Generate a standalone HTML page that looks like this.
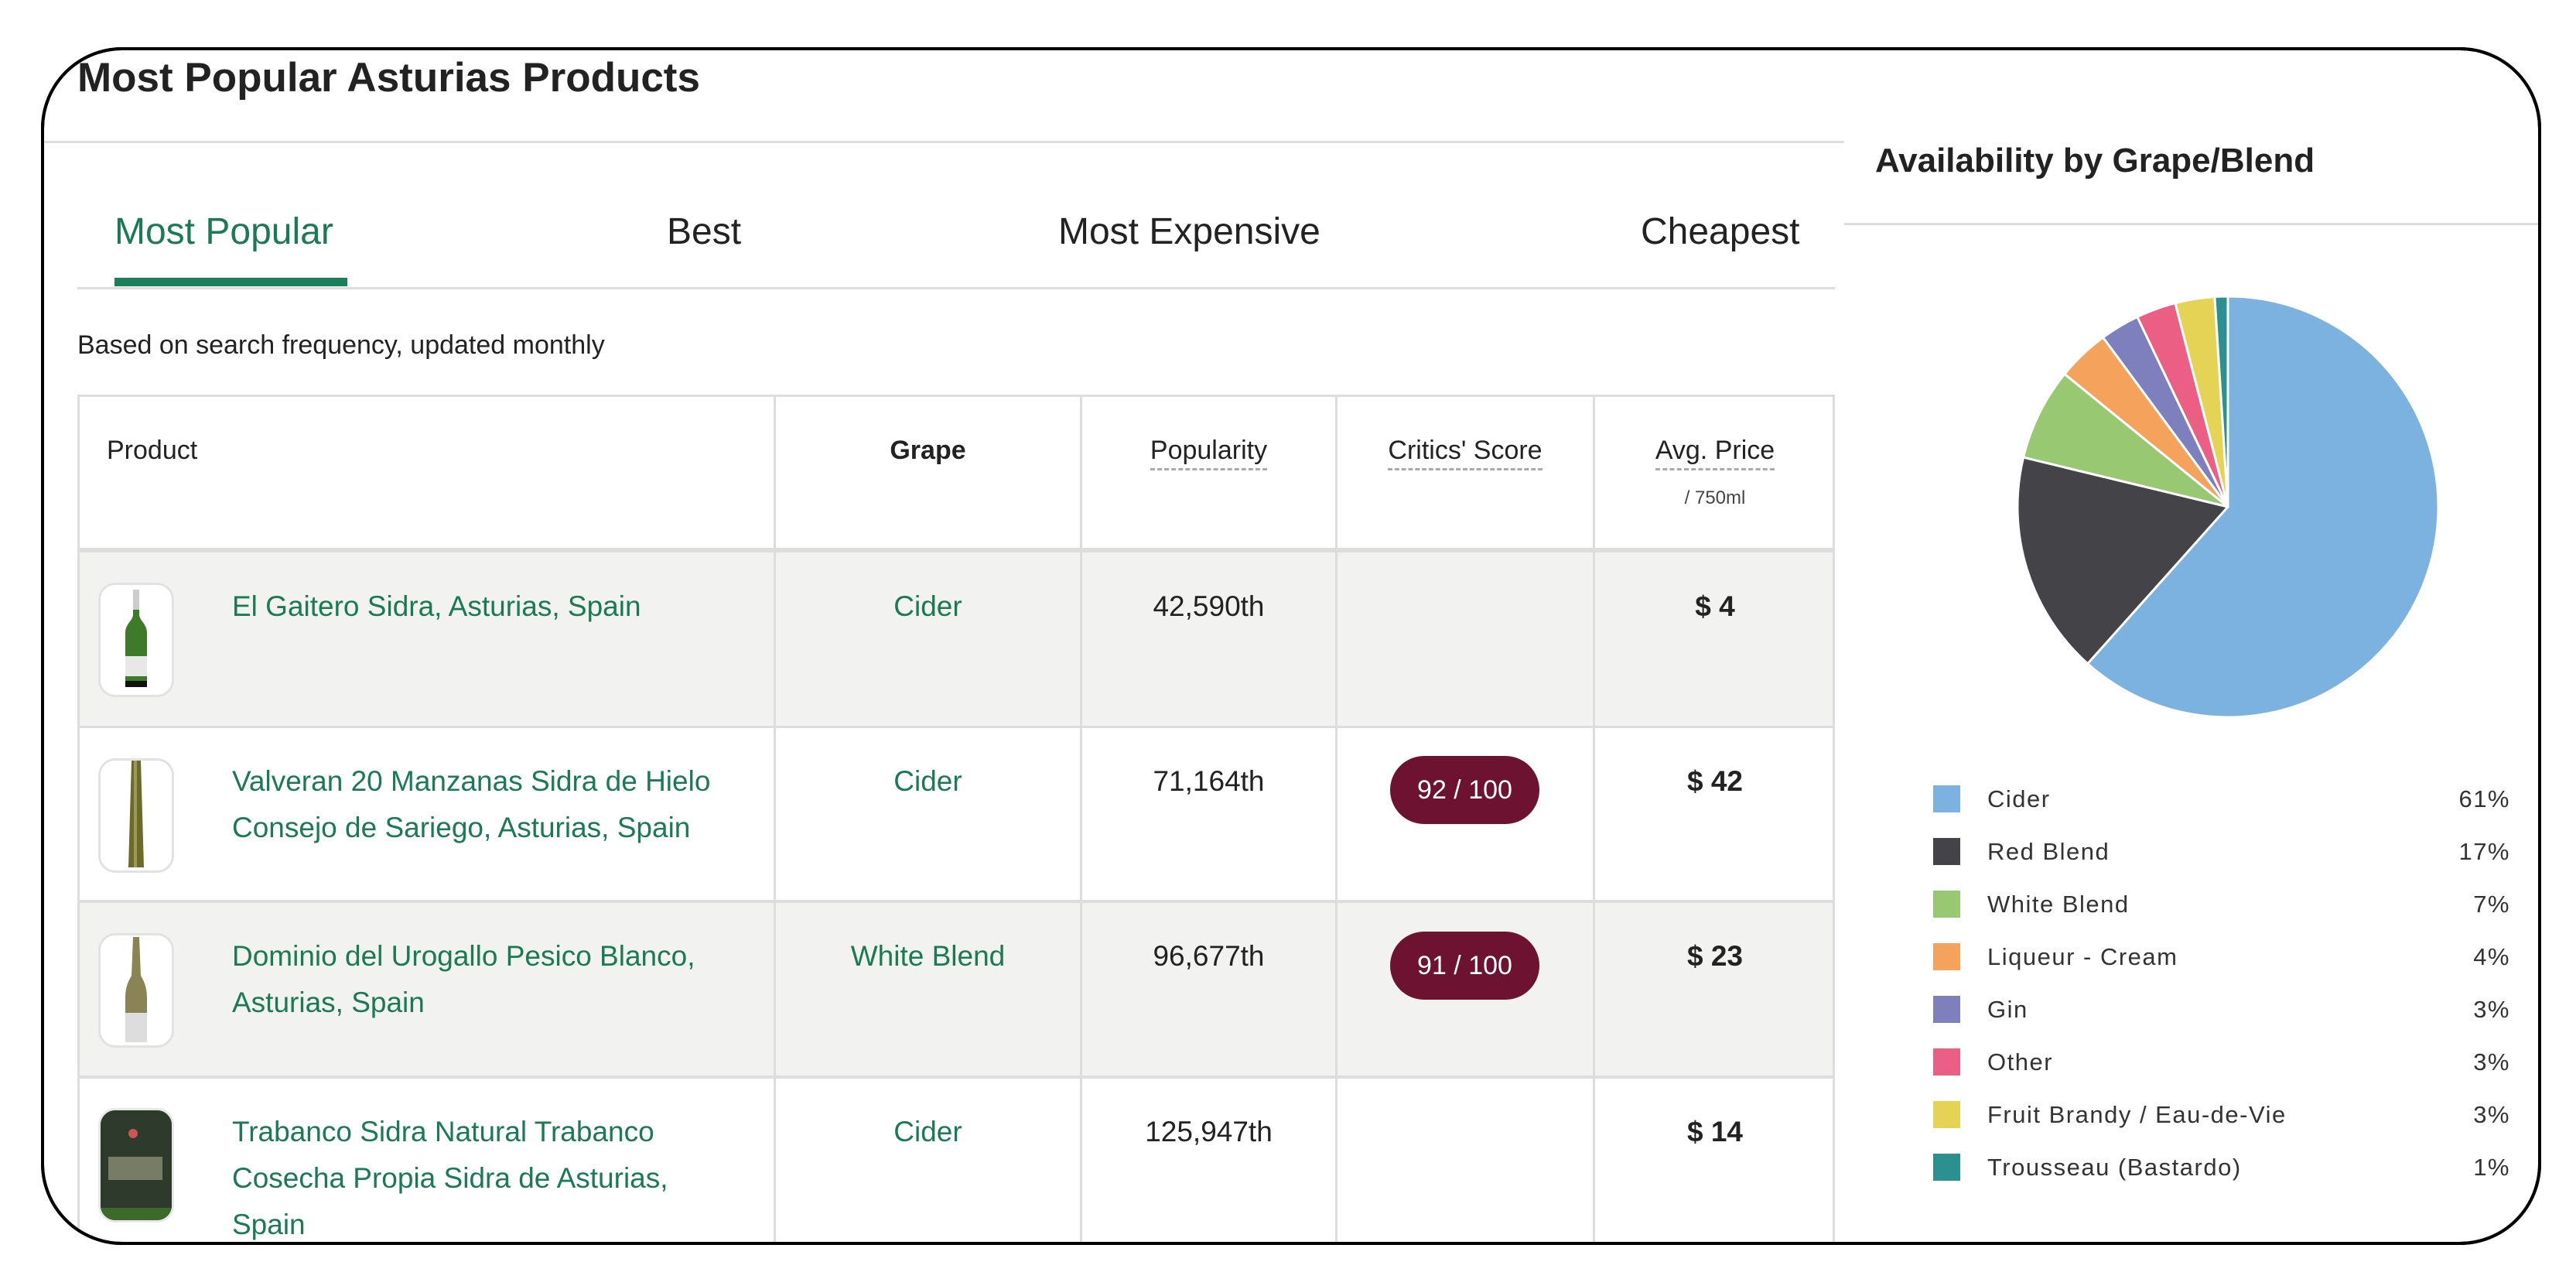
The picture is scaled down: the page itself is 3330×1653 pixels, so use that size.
<!DOCTYPE html>
<html><head><meta charset="utf-8"><style>
*{margin:0;padding:0;box-sizing:border-box}
body{width:3330px;height:1653px;background:#fff;position:relative;overflow:hidden;font-family:"Liberation Sans",sans-serif;color:#222}
.frame{position:absolute;left:53px;top:61px;width:3232px;height:1548px;border:4px solid #000;border-radius:105px;overflow:hidden;background:#fff}
.a{position:absolute;white-space:nowrap}
.g{color:#1a7a55}
.hl{position:absolute;background:#ddd}
.cell{position:absolute;font-size:37px;line-height:60px}
.c{text-align:center}
.badge{position:absolute;left:1797px;width:193px;height:88px;border-radius:44px;background:#6d1230;color:#fff;font-size:34px;text-align:center;line-height:88px}
.th{position:absolute;left:127px;width:98px;height:148px;border:3px solid #e2e2e2;border-radius:22px;background:#fff;overflow:hidden}
.dash{border-bottom:3px dashed #aaa;padding-bottom:4px}
.lg{position:absolute;left:2499px;width:35px;height:35px}
.lt{position:absolute;left:2569px;font-size:31px;letter-spacing:1.5px;color:#333;line-height:35px;white-space:nowrap}
.lp{position:absolute;right:85px;font-size:31px;letter-spacing:1.5px;color:#333;line-height:35px;text-align:right}
</style></head><body>
<div class="frame"></div>
<div style="position:absolute;left:53px;top:61px;width:3232px;height:1548px;border-radius:105px;overflow:hidden">
<div style="position:absolute;left:-53px;top:-61px;width:3330px;height:1653px">

<div class="a" style="left:100px;top:70px;font-size:53px;line-height:62px;color:#222;font-weight:bold">Most Popular Asturias Products</div>
<div class="hl" style="left:54px;top:182px;width:2330px;height:3px"></div>

<div class="a g" style="left:148px;top:270px;font-size:48px;line-height:60px">Most Popular</div>
<div class="a" style="left:862px;top:270px;font-size:48px;line-height:60px">Best</div>
<div class="a" style="left:1368px;top:270px;font-size:48px;line-height:60px">Most Expensive</div>
<div class="a" style="left:2121px;top:270px;font-size:48px;line-height:60px">Cheapest</div>
<div style="position:absolute;left:148px;top:359px;width:301px;height:11px;background:#1a7f5a"></div>
<div class="hl" style="left:100px;top:371px;width:2272px;height:3px"></div>

<div class="a" style="left:100px;top:424px;font-size:34px;line-height:44px">Based on search frequency, updated monthly</div>

<div style="position:absolute;left:100px;top:510px;width:2272px;height:1200px;border:3px solid #ddd;border-bottom:none"></div>
<div style="position:absolute;left:103px;top:712px;width:2266px;height:227px;background:#f2f2f0"></div>
<div style="position:absolute;left:103px;top:1164px;width:2266px;height:227px;background:#f2f2f0"></div>
<div class="hl" style="left:100px;top:708px;width:2272px;height:6px"></div>
<div class="hl" style="left:100px;top:938px;width:2272px;height:3px"></div>
<div class="hl" style="left:100px;top:1163px;width:2272px;height:4px"></div>
<div class="hl" style="left:100px;top:1390px;width:2272px;height:4px"></div>
<div class="hl" style="left:1000px;top:510px;width:3px;height:1100px"></div>
<div class="hl" style="left:1396px;top:510px;width:3px;height:1100px"></div>
<div class="hl" style="left:1726px;top:510px;width:3px;height:1100px"></div>
<div class="hl" style="left:2059px;top:510px;width:3px;height:1100px"></div>

<div class="a" style="left:138px;top:560px;font-size:34px;line-height:44px">Product</div>
<div class="a c" style="left:1003px;width:393px;top:560px;font-size:34px;line-height:44px;font-weight:bold">Grape</div>
<div class="a c" style="left:1399px;width:327px;top:562px;font-size:34px;line-height:40px"><span class="dash">Popularity</span></div>
<div class="a c" style="left:1729px;width:330px;top:562px;font-size:34px;line-height:40px"><span class="dash">Critics' Score</span></div>
<div class="a c" style="left:2062px;width:310px;top:562px;font-size:34px;line-height:40px"><span class="dash">Avg. Price</span></div>
<div class="a c" style="left:2062px;width:310px;top:628px;font-size:24px;line-height:32px;color:#444">/ 750ml</div>

<div class="th" style="top:753px"><svg width="92" height="142" viewBox="0 0 92 142"><path d="M42 8h8v30c0 8 10 12 10 24v70H32V62c0-12 10-16 10-24z" fill="#3d7a2a"/><rect x="42" y="6" width="8" height="26" fill="#ccc"/><rect x="32" y="92" width="28" height="26" fill="#e8e8e8"/><rect x="32" y="124" width="28" height="8" fill="#111"/></svg></div>
<div class="cell g" style="left:300px;top:754px">El Gaitero Sidra, Asturias, Spain</div>
<div class="cell g c" style="left:1003px;width:393px;top:754px">Cider</div>
<div class="cell c" style="left:1399px;width:327px;top:754px">42,590th</div>
<div class="cell c" style="left:2062px;width:310px;top:754px;font-weight:bold">$ 4</div>

<div class="th" style="top:980px"><svg width="92" height="142" viewBox="0 0 92 142"><path d="M40 0h12l4 138H36z" fill="#6b6a2a"/><rect x="43" y="0" width="4" height="138" fill="#9a9a55"/></svg></div>
<div class="cell g" style="left:300px;top:980px">Valveran 20 Manzanas Sidra de Hielo<br>Consejo de Sariego, Asturias, Spain</div>
<div class="cell g c" style="left:1003px;width:393px;top:980px">Cider</div>
<div class="cell c" style="left:1399px;width:327px;top:980px">71,164th</div>
<div class="badge" style="top:977px">92 / 100</div>
<div class="cell c" style="left:2062px;width:310px;top:980px;font-weight:bold">$ 42</div>

<div class="th" style="top:1206px"><svg width="92" height="142" viewBox="0 0 92 142"><path d="M42 2h8l2 50c6 10 8 18 8 30v56H32V82c0-12 2-20 8-30z" fill="#8a8455"/><rect x="32" y="100" width="28" height="38" fill="#ddd"/></svg></div>
<div class="cell g" style="left:300px;top:1206px">Dominio del Urogallo Pesico Blanco,<br>Asturias, Spain</div>
<div class="cell g c" style="left:1003px;width:393px;top:1206px">White Blend</div>
<div class="cell c" style="left:1399px;width:327px;top:1206px">96,677th</div>
<div class="badge" style="top:1204px">91 / 100</div>
<div class="cell c" style="left:2062px;width:310px;top:1206px;font-weight:bold">$ 23</div>

<div class="th" style="top:1432px;background:#2a3328;border-color:#e8e8e8"><svg width="92" height="142" viewBox="0 0 92 142"><rect width="92" height="142" fill="#2d3a2c"/><rect x="10" y="60" width="70" height="30" fill="#a8a890" opacity=".6"/><circle cx="42" cy="30" r="6" fill="#c55"/><rect x="0" y="126" width="92" height="16" fill="#3c6a2a"/></svg></div>
<div class="cell g" style="left:300px;top:1433px">Trabanco Sidra Natural Trabanco<br>Cosecha Propia Sidra de Asturias,<br>Spain</div>
<div class="cell g c" style="left:1003px;width:393px;top:1433px">Cider</div>
<div class="cell c" style="left:1399px;width:327px;top:1433px">125,947th</div>
<div class="cell c" style="left:2062px;width:310px;top:1433px;font-weight:bold">$ 14</div>

<div class="a" style="left:2424px;top:180px;font-size:44px;line-height:56px;font-weight:bold;color:#222">Availability by Grape/Blend</div>
<div class="hl" style="left:2384px;top:288px;width:950px;height:3px"></div>

<svg style="position:absolute;left:2600px;top:375px" width="560" height="560" viewBox="0 0 560 560">
<g stroke="#fff" stroke-width="3" stroke-linejoin="round">
<path d="M280 280L280 8A272 272 0 1 1 98.7 482.8Z" fill="#7cb2e0"/>
<path d="M280 280L98.7 482.8A272 272 0 0 1 15.6 216.1Z" fill="#434348"/>
<path d="M280 280L15.6 216.1A272 272 0 0 1 68.9 108.4Z" fill="#99c872"/>
<path d="M280 280L68.9 108.4A272 272 0 0 1 118.6 61.1Z" fill="#f5a35c"/>
<path d="M280 280L118.6 61.1A272 272 0 0 1 162.9 34.5Z" fill="#7d80bc"/>
<path d="M280 280L162.9 34.5A272 272 0 0 1 211.9 16.7Z" fill="#ec5f84"/>
<path d="M280 280L211.9 16.7A272 272 0 0 1 262.9 8.5Z" fill="#e4d354"/>
<path d="M280 280L262.9 8.5A272 272 0 0 1 280 8Z" fill="#2b908f"/>
</g></svg>

<div class="lg" style="top:1015px;background:#7cb2e0"></div><div class="lt" style="top:1015px">Cider</div><div class="lp" style="top:1015px">61%</div>
<div class="lg" style="top:1083px;background:#434348"></div><div class="lt" style="top:1083px">Red Blend</div><div class="lp" style="top:1083px">17%</div>
<div class="lg" style="top:1151px;background:#99c872"></div><div class="lt" style="top:1151px">White Blend</div><div class="lp" style="top:1151px">7%</div>
<div class="lg" style="top:1219px;background:#f5a35c"></div><div class="lt" style="top:1219px">Liqueur - Cream</div><div class="lp" style="top:1219px">4%</div>
<div class="lg" style="top:1287px;background:#7d80bc"></div><div class="lt" style="top:1287px">Gin</div><div class="lp" style="top:1287px">3%</div>
<div class="lg" style="top:1355px;background:#ec5f84"></div><div class="lt" style="top:1355px">Other</div><div class="lp" style="top:1355px">3%</div>
<div class="lg" style="top:1423px;background:#e4d354"></div><div class="lt" style="top:1423px">Fruit Brandy / Eau-de-Vie</div><div class="lp" style="top:1423px">3%</div>
<div class="lg" style="top:1491px;background:#2b908f"></div><div class="lt" style="top:1491px">Trousseau (Bastardo)</div><div class="lp" style="top:1491px">1%</div>

</div></div>
<div class="frame" style="background:transparent"></div>
</body></html>
